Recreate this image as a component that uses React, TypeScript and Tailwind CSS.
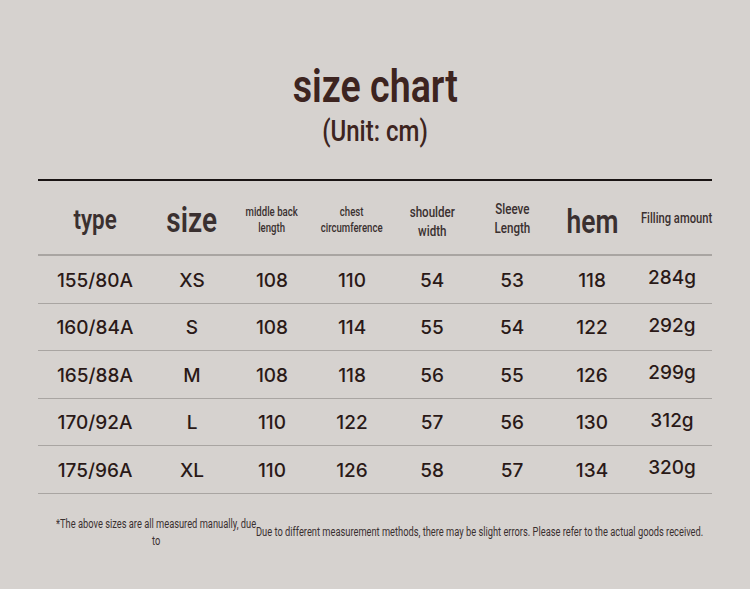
import React, { FC } from 'react';

const cond = { fontFamily: '"Roboto", "Liberation Sans", sans-serif' };
const num = { fontFamily: '"Inter", "Noto Sans", sans-serif' };

const rows = [
  ['155/80A', 'XS', '108', '110', '54', '53', '118', '284g'],
  ['160/84A', 'S', '108', '114', '55', '54', '122', '292g'],
  ['165/88A', 'M', '108', '118', '56', '55', '126', '299g'],
  ['170/92A', 'L', '110', '122', '57', '56', '130', '312g'],
  ['175/96A', 'XL', '110', '126', '58', '57', '134', '320g'],
];

const cols = 'grid grid-cols-[114px_80px_80px_80px_80px_80px_80px_80px]';

// squeezed text: Roboto narrowed to stand in for the condensed face
const Sq: FC<{ children: React.ReactNode; className?: string }> = ({ children, className = '' }) => (
  <span className={`inline-block scale-x-[0.8] whitespace-nowrap ${className}`}>{children}</span>
);

const App: FC = () => {
  return (
    <div className="w-[750px] h-[589px] bg-[#d6d2cf] text-[#2e1c1a] flex flex-col items-center overflow-hidden" style={cond}>
      <h1 className="mt-[58px] text-[47px] leading-[56px] font-semibold text-[#3d2420]"><Sq>size chart</Sq></h1>
      <div className="text-[30px] leading-[34px] font-medium text-[#3d2420]"><Sq>(Unit: cm)</Sq></div>

      <div className="mt-[31px] w-[674px] border-t-2 border-[#1a1414]">
        <div className={`${cols} h-[75px] items-center text-center text-[#3a3030] border-b-2 border-[#a9a5a2]`}>
          <div className="text-[28px] font-semibold pt-[4px]"><Sq>type</Sq></div>
          <div className="text-[35px] font-semibold pt-[8px]"><Sq>size</Sq></div>
          <div className="text-[12px] leading-[16px] font-medium pt-[4px]"><Sq>middle back<br />length</Sq></div>
          <div className="text-[12px] leading-[16px] font-medium pt-[4px]"><Sq>chest<br />circumference</Sq></div>
          <div className="text-[14.5px] leading-[19px] font-medium pt-[8px]"><Sq>shoulder<br />width</Sq></div>
          <div className="text-[14.5px] leading-[19px] font-medium pt-[3px]"><Sq>Sleeve<br />Length</Sq></div>
          <div className="text-[33px] font-semibold pt-[8px]"><Sq>hem</Sq></div>
          <div className="text-[14px] font-medium pt-[1px]"><Sq>Filling amount</Sq></div>
        </div>
        {rows.map((r) => (
          <div key={r[0]} className={`${cols} h-[47.5px] items-center text-center text-[19px] font-medium text-[#2a1917] border-b border-[#a9a5a2]`} style={num}>
            {r.map((c, i) => (
              <div key={i} className={i === 7 ? '-mt-[2px]' : 'pt-[3px]'}>{c}</div>
            ))}
          </div>
        ))}
      </div>

      <div className="mt-[22px] w-[674px] flex items-center text-[12px] leading-[17px] text-[#3a3030]">
        <div className="ml-[18px] w-[200px] shrink-0 flex justify-center">
          <span className="inline-block scale-x-[0.775] whitespace-nowrap text-center">
            *The above sizes are all measured manually, due<br />to
          </span>
        </div>
        <div className="w-[447px] shrink-0">
          <span className="inline-block scale-x-[0.775] origin-left whitespace-nowrap">
            Due to different measurement methods, there may be slight errors. Please refer to the actual goods received.
          </span>
        </div>
      </div>
    </div>
  );
};

export default App;
